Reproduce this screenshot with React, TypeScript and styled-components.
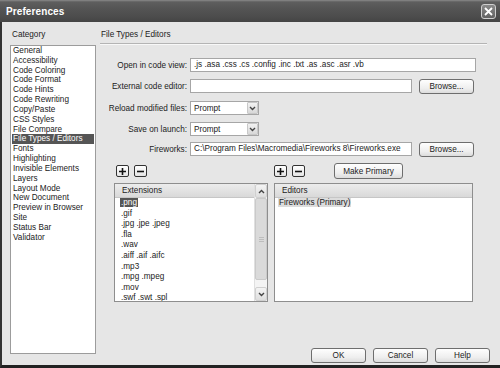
import styled, { createGlobalStyle } from "styled-components";

const categories = [
  "General",
  "Accessibility",
  "Code Coloring",
  "Code Format",
  "Code Hints",
  "Code Rewriting",
  "Copy/Paste",
  "CSS Styles",
  "File Compare",
  "File Types / Editors",
  "Fonts",
  "Highlighting",
  "Invisible Elements",
  "Layers",
  "Layout Mode",
  "New Document",
  "Preview in Browser",
  "Site",
  "Status Bar",
  "Validator",
];

const extensions = [
  ".png",
  ".gif",
  ".jpg .jpe .jpeg",
  ".fla",
  ".wav",
  ".aiff .aif .aifc",
  ".mp3",
  ".mpg .mpeg",
  ".mov",
  ".swf .swt .spl",
];

const GlobalStyle = createGlobalStyle`
  *, *::before, *::after { box-sizing: border-box; }
  html, body { margin: 0; padding: 0; }
  body {
    background: #e6e6e6;
    font-family: "Liberation Sans", Arial, sans-serif;
    font-size: 8.2px;
    color: #222;
  }
`;

const Window = styled.div`
  width: 500px;
  height: 368px;
  display: flex;
  flex-direction: column;
  overflow: hidden;
  background: #e6e6e6;
`;

const TitleBar = styled.div`
  height: 22px;
  flex-shrink: 0;
  display: flex;
  align-items: center;
  justify-content: space-between;
  padding: 0 4px 0 6px;
  background: linear-gradient(#8a8a8a 0, #5e5e5e 2px, #555 8px, #4c4c4c 17px, #444 22px);
`;

const Title = styled.span`
  color: #fff;
  font-weight: bold;
  font-size: 10px;
  letter-spacing: 0.1px;
`;

const CloseButton = styled.div`
  width: 15px;
  height: 15px;
  border: 1px solid #cfcfcf;
  border-radius: 3px;
  background: linear-gradient(#8a8a8a, #626262);
  display: flex;
  align-items: center;
  justify-content: center;
`;

const Frame = styled.div`
  flex: 1;
  min-height: 0;
  display: grid;
  grid-template-columns: 86px 390px;
  column-gap: 4px;
  padding: 7px 10px 2px 8px;
  border-left: 2px solid #333;
  border-bottom: 3px solid #222;
`;

const Sidebar = styled.div`
  display: flex;
  flex-direction: column;
  min-height: 0;
  padding-bottom: 9px;
`;

const SectionLabel = styled.div`
  height: 12px;
  line-height: 12px;
  padding-left: 2px;
`;

const CategoryList = styled.ul`
  flex: 1;
  margin: 4px 0 0;
  padding: 0 1px;
  list-style: none;
  background: #fff;
  border: 1px solid #9c9c9c;
  overflow: hidden;
`;

const CategoryItem = styled.li<{ $selected?: boolean }>`
  height: 9.84px;
  line-height: 9.84px;
  padding-left: 1px;
  white-space: nowrap;
  background: ${(p) => (p.$selected ? "#555" : "transparent")};
  color: ${(p) => (p.$selected ? "#fff" : "inherit")};
`;

const Main = styled.div`
  display: flex;
  flex-direction: column;
  min-height: 0;
`;

const PanelTitle = styled.div`
  height: 12px;
  line-height: 12px;
  padding-left: 1px;
`;

const Separator = styled.div`
  height: 1px;
  margin: 2px 3px 0 0;
  background: #b4b4b4;
  box-shadow: 0 1px 0 #f8f8f8;
`;

const FormRow = styled.div<{ $mt: number }>`
  display: flex;
  align-items: center;
  height: 16px;
  margin-top: ${(p) => p.$mt}px;
`;

const FieldLabel = styled.label`
  width: 87px;
  margin-right: 3px;
  text-align: right;
  white-space: nowrap;
`;

const TextField = styled.div<{ $width: number }>`
  width: ${(p) => p.$width}px;
  height: 14px;
  line-height: 12px;
  padding-left: 3px;
  background: #fff;
  border: 1px solid #a6a6a6;
  white-space: nowrap;
  overflow: hidden;
`;

const Select = styled.div`
  width: 69px;
  height: 14px;
  display: flex;
  align-items: center;
  justify-content: space-between;
  padding-left: 3px;
  background: #fff;
  border: 1px solid #a6a6a6;
`;

const SelectArrow = styled.span`
  width: 11px;
  height: 12px;
  display: flex;
  align-items: center;
  justify-content: center;
  background: linear-gradient(#f2f2f2, #d8d8d8);
  border: 1px solid #c8c8c8;
  border-radius: 1px;
`;

const Button = styled.button<{ $width: number; $height?: number; $ml?: number }>`
  width: ${(p) => p.$width}px;
  height: ${(p) => p.$height ?? 15}px;
  margin-left: ${(p) => p.$ml ?? 0}px;
  padding: 0;
  font: inherit;
  color: #222;
  border: 1px solid #6e6e6e;
  border-radius: 3px;
  background: linear-gradient(#fefefe, #eeeeee 65%, #dcdcdc);
`;

const TwinGrid = styled.div<{ $mt: number; $height: number }>`
  display: grid;
  grid-template-columns: 154px 199px;
  column-gap: 6px;
  margin: ${(p) => p.$mt}px 0 0 14px;
  height: ${(p) => p.$height}px;
`;

const ToolGroup = styled.div<{ $pl?: number }>`
  display: flex;
  align-items: center;
  gap: 5px;
  padding-left: ${(p) => p.$pl ?? 0}px;
`;

const IconButton = styled.div`
  width: 13px;
  height: 12px;
  display: flex;
  align-items: center;
  justify-content: center;
  border: 1px solid #333;
  border-radius: 2px;
  background: linear-gradient(#fff, #e4e4e4);
`;

const ListBox = styled.div`
  display: grid;
  grid-template-columns: 1fr auto;
  min-height: 0;
  background: #fff;
  border: 1px solid #8e8e8e;
  overflow: hidden;
`;

const ListColumn = styled.div`
  display: flex;
  flex-direction: column;
  min-height: 0;
  overflow: hidden;
`;

const ListHeader = styled.div`
  height: 14px;
  flex-shrink: 0;
  line-height: 14px;
  padding-left: 7px;
  background: linear-gradient(#ececec, #d9d9d9);
  border-bottom: 1px solid #c6c6c6;
`;

const ListItems = styled.ul<{ $pl: number }>`
  margin: 0;
  padding: 0 0 0 ${(p) => p.$pl}px;
  list-style: none;
`;

const ListItem = styled.li`
  height: 10.6px;
  line-height: 10.6px;
  white-space: nowrap;
`;

const ItemText = styled.span<{ $tone?: "focus" | "blur" }>`
  padding: 0 1px;
  background: ${(p) => (p.$tone === "focus" ? "#555" : p.$tone === "blur" ? "#dcdcdc" : "transparent")};
  color: ${(p) => (p.$tone === "focus" ? "#fff" : "inherit")};
`;

const ScrollBar = styled.div`
  width: 13px;
  display: flex;
  flex-direction: column;
  background: #f4f4f4;
  border-left: 1px solid #e0e0e0;
`;

const ScrollArrow = styled.div`
  height: 14px;
  flex-shrink: 0;
  display: flex;
  align-items: center;
  justify-content: center;
  background: linear-gradient(#f4f4f4, #dedede);
  border: 1px solid #d0d0d0;
  border-radius: 2px;
`;

const ScrollThumb = styled.div`
  height: 82px;
  flex-shrink: 0;
  display: flex;
  align-items: center;
  justify-content: center;
  background: #dadada;
  border: 1px solid #cacaca;
  border-radius: 2px;
`;

const ScrollTrack = styled.div`
  flex: 1;
`;

const Footer = styled.div`
  margin-top: auto;
  display: flex;
  justify-content: flex-end;
  gap: 7px;
`;

const Chevron = ({ up }: { up?: boolean }) => (
  <svg width="7" height="5" viewBox="0 0 7 5">
    <path
      d={up ? "M1 4 L3.5 1.5 L6 4" : "M1 1 L3.5 3.5 L6 1"}
      stroke="#444"
      strokeWidth="1.4"
      fill="none"
    />
  </svg>
);

const PlusIcon = () => (
  <svg width="7" height="7" viewBox="0 0 7 7">
    <path d="M3.5 0 V7 M0 3.5 H7" stroke="#111" strokeWidth="1.6" />
  </svg>
);

const MinusIcon = () => (
  <svg width="7" height="7" viewBox="0 0 7 7">
    <path d="M0 3.5 H7" stroke="#111" strokeWidth="1.6" />
  </svg>
);

const GripIcon = () => (
  <svg width="5" height="5" viewBox="0 0 5 5">
    <path d="M0 0.5 H5 M0 2.5 H5 M0 4.5 H5" stroke="#bdbdbd" strokeWidth="1" />
  </svg>
);

const App = () => (
  <>
    <GlobalStyle />
    <Window>
      <TitleBar>
        <Title>Preferences</Title>
        <CloseButton>
          <svg width="9" height="9" viewBox="0 0 9 9">
            <path d="M1 1 L8 8 M8 1 L1 8" stroke="#fff" strokeWidth="1.8" />
          </svg>
        </CloseButton>
      </TitleBar>
      <Frame>
        <Sidebar>
          <SectionLabel>Category</SectionLabel>
          <CategoryList>
            {categories.map((c) => (
              <CategoryItem key={c} $selected={c === "File Types / Editors"}>
                {c}
              </CategoryItem>
            ))}
          </CategoryList>
        </Sidebar>
        <Main>
          <PanelTitle>File Types / Editors</PanelTitle>
          <Separator />
          <FormRow $mt={13}>
            <FieldLabel>Open in code view:</FieldLabel>
            <TextField $width={286}>.js .asa .css .cs .config .inc .txt .as .asc .asr .vb</TextField>
          </FormRow>
          <FormRow $mt={5}>
            <FieldLabel>External code editor:</FieldLabel>
            <TextField $width={222} />
            <Button $width={55} $ml={7}>Browse...</Button>
          </FormRow>
          <FormRow $mt={6}>
            <FieldLabel>Reload modified files:</FieldLabel>
            <Select>
              Prompt
              <SelectArrow>
                <Chevron />
              </SelectArrow>
            </Select>
          </FormRow>
          <FormRow $mt={5}>
            <FieldLabel>Save on launch:</FieldLabel>
            <Select>
              Prompt
              <SelectArrow>
                <Chevron />
              </SelectArrow>
            </Select>
          </FormRow>
          <FormRow $mt={4}>
            <FieldLabel>Fireworks:</FieldLabel>
            <TextField $width={222}>C:\Program Files\Macromedia\Fireworks 8\Fireworks.exe</TextField>
            <Button $width={55} $ml={7}>Browse...</Button>
          </FormRow>
          <TwinGrid $mt={6} $height={16}>
            <ToolGroup $pl={2}>
              <IconButton><PlusIcon /></IconButton>
              <IconButton><MinusIcon /></IconButton>
            </ToolGroup>
            <ToolGroup>
              <IconButton><PlusIcon /></IconButton>
              <IconButton><MinusIcon /></IconButton>
              <Button $width={69} $height={16} $ml={24}>Make Primary</Button>
            </ToolGroup>
          </TwinGrid>
          <TwinGrid $mt={4} $height={119}>
            <ListBox>
              <ListColumn>
                <ListHeader>Extensions</ListHeader>
                <ListItems $pl={5}>
                  {extensions.map((e, i) => (
                    <ListItem key={e}>
                      <ItemText $tone={i === 0 ? "focus" : undefined}>{e}</ItemText>
                    </ListItem>
                  ))}
                </ListItems>
              </ListColumn>
              <ScrollBar>
                <ScrollArrow><Chevron up /></ScrollArrow>
                <ScrollThumb><GripIcon /></ScrollThumb>
                <ScrollTrack />
                <ScrollArrow><Chevron /></ScrollArrow>
              </ScrollBar>
            </ListBox>
            <ListBox>
              <ListColumn>
                <ListHeader>Editors</ListHeader>
                <ListItems $pl={3}>
                  <ListItem>
                    <ItemText $tone="blur">Fireworks (Primary)</ItemText>
                  </ListItem>
                </ListItems>
              </ListColumn>
            </ListBox>
          </TwinGrid>
          <Footer>
            <Button $width={55}>OK</Button>
            <Button $width={55}>Cancel</Button>
            <Button $width={55}>Help</Button>
          </Footer>
        </Main>
      </Frame>
    </Window>
  </>
);

export default App;
